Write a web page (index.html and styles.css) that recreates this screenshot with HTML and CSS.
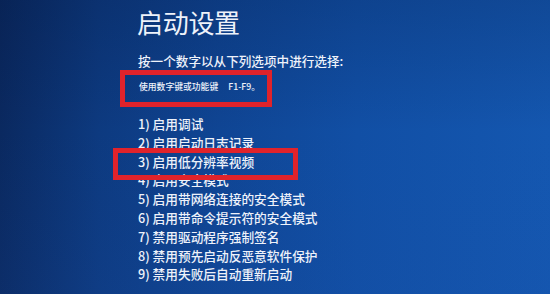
FILE: index.html
```html
<!DOCTYPE html>
<html lang="zh-CN">
<head>
<meta charset="utf-8">
<title>启动设置</title>
<link rel="stylesheet" href="styles.css">
</head>
<body>
<div class="screen">
  <div class="content">
    <h1 class="title">启动设置</h1>
    <p class="prompt">按一个数字以从下列选项中进行选择:</p>
    <p class="note">使用数字键或功能键<span class="keys">F1-F9。</span></p>
    <ol class="options">
      <li>1) 启用调试</li>
      <li>2) 启用启动日志记录</li>
      <li>3) 启用低分辨率视频</li>
      <li>4) 启用安全模式</li>
      <li>5) 启用带网络连接的安全模式</li>
      <li>6) 启用带命令提示符的安全模式</li>
      <li>7) 禁用驱动程序强制签名</li>
      <li>8) 禁用预先启动反恶意软件保护</li>
      <li>9) 禁用失败后自动重新启动</li>
    </ol>
  </div>
  <div class="mark mark-note"></div>
  <div class="mark mark-option"></div>
</div>
</body>
</html>
```
FILE: styles.css
```css
* { box-sizing: border-box; }
html, body { margin: 0; padding: 0; }
body {
  width: 550px;
  height: 294px;
  overflow: hidden;
  font-family: "Noto Sans CJK SC", "Noto Sans", "DejaVu Sans", sans-serif;
  color: #eef2fa;
}
.screen {
  position: relative;
  width: 550px;
  height: 294px;
  background:
    linear-gradient(180deg, rgba(0,10,40,0.18) 0%, rgba(0,0,0,0) 45%, rgba(30,80,170,0.12) 100%),
    linear-gradient(90deg, #0a2960 0%, #0d3a80 18%, #0f4594 40%, #114fa5 65%, #1457b0 100%);
}
.content {
  display: flex;
  flex-direction: column;
  padding: 9px 0 0 137px;
}
.title {
  margin: 0;
  font-size: 26px;
  line-height: 26px;
  font-weight: 400;
  letter-spacing: -0.3px;
}
.prompt {
  margin: 19px 0 0 1px;
  font-size: 12.6px;
  line-height: 13px;
  font-weight: 500;
}
.note {
  margin: 15px 0 0 2px;
  font-size: 8.8px;
  line-height: 9px;
  font-weight: 500;
}
.keys { margin-left: 10px; }
.options {
  list-style: none;
  margin: 24px 0 0 1px;
  padding: 0;
  font-size: 12.7px;
  line-height: 18.8px;
  font-weight: 500;
}
.mark {
  position: absolute;
  border: 5px solid #e0232b;
}
.mark-note {
  left: 120px;
  top: 70px;
  width: 152px;
  height: 37px;
}
.mark-option {
  left: 113px;
  top: 148px;
  width: 185px;
  height: 32px;
}
```
